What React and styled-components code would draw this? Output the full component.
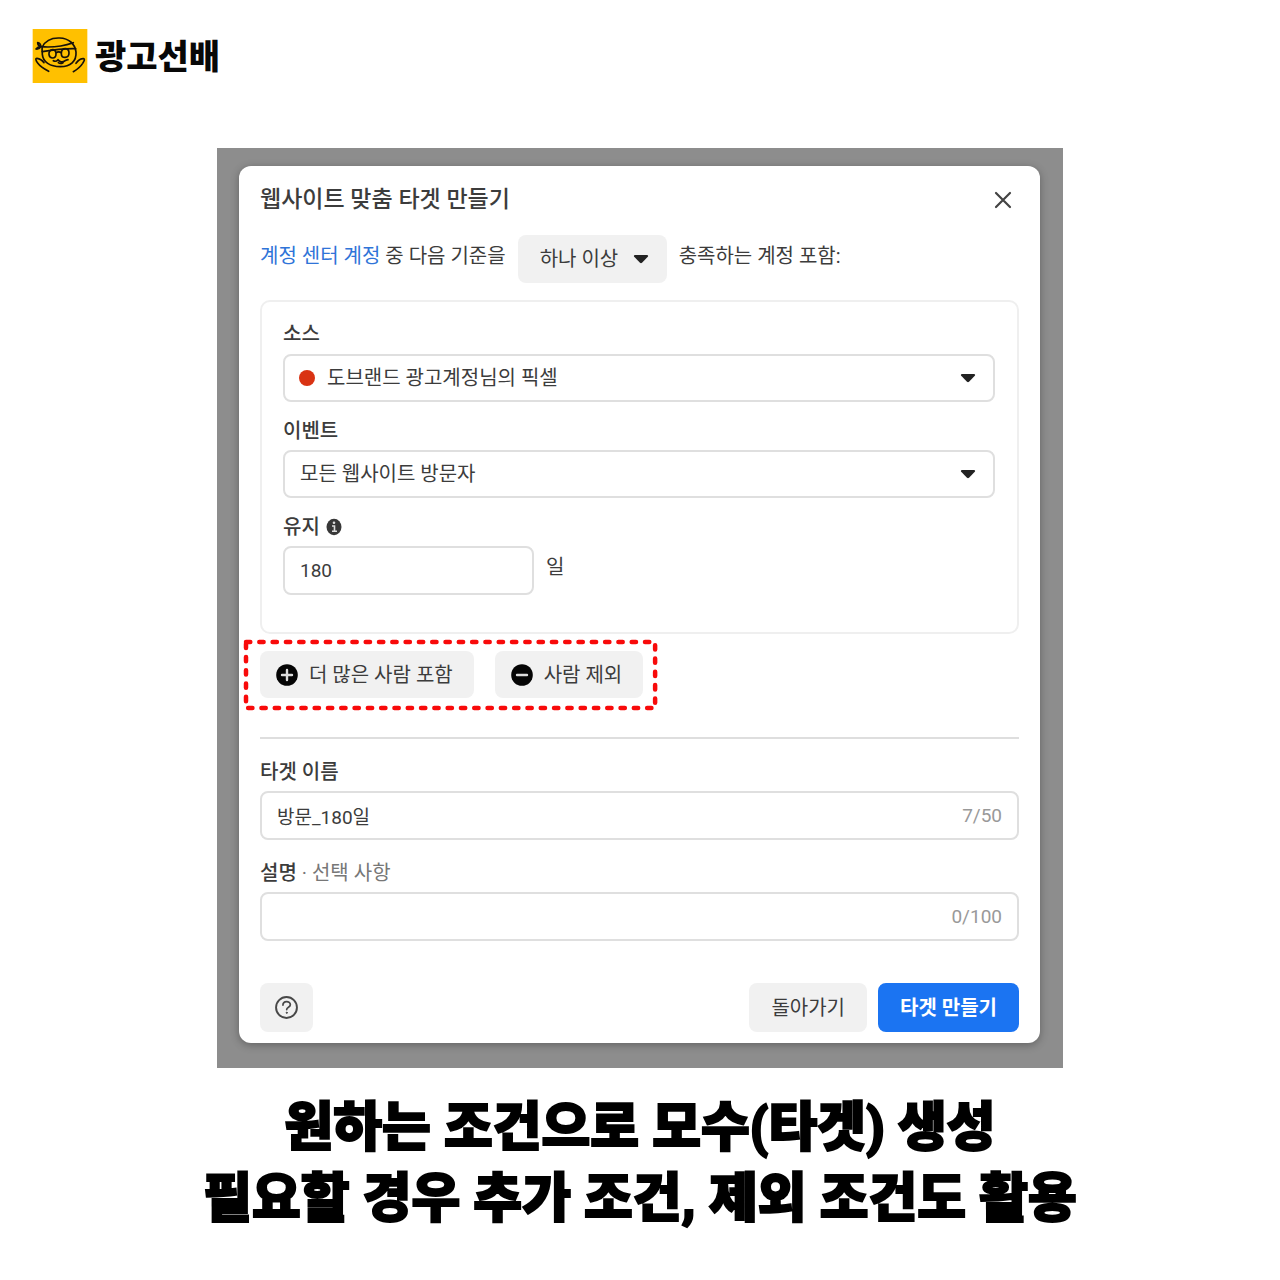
import React, { useState } from "react";
import styled, { createGlobalStyle, css } from "styled-components";

const GlobalStyle = createGlobalStyle`
  *, *::before, *::after { box-sizing: border-box; }
  body {
    margin: 0;
    background: #fff;
    color: #3c3c3c;
    font-family: Roboto, "Noto Sans CJK KR", sans-serif;
    font-size: 20px;
    line-height: 28px;
  }
  button, input, select { font: inherit; color: inherit; margin: 0; }
`;

const Page = styled.div`
  padding: 28px 32px 40px;
`;

const Brand = styled.header`
  display: flex;
  align-items: center;
  gap: 7px;
  margin-bottom: 64px;
`;

const BrandName = styled.span`
  padding-top: 2px;
  color: #080808;
  font-size: 34px;
  font-weight: 900;
  line-height: 40px;
`;

const Backdrop = styled.main`
  max-width: 846px;
  margin: 0 auto;
  padding: 18px 23px 25px 22px;
  background: #8d8d8d;
`;

const Dialog = styled.section`
  padding: 18px 21px 11px;
  border-radius: 12px;
  background: #fff;
  box-shadow: 0 2px 8px rgba(0, 0, 0, 0.3);
`;

const DialogHeader = styled.div`
  display: flex;
  align-items: center;
  justify-content: space-between;
  height: 32px;
`;

const DialogTitle = styled.h1`
  margin: 0;
  font-size: 23px;
  font-weight: 500;
  line-height: 32px;
`;

const CloseButton = styled.button`
  display: flex;
  align-items: center;
  justify-content: center;
  width: 32px;
  height: 32px;
  padding: 0;
  border: 0;
  background: none;
`;

const Criteria = styled.div`
  display: flex;
  align-items: flex-start;
  gap: 12px;
  margin: 19px 0 17px;
`;

const RowText = styled.span`
  line-height: 42px;
`;

const CenterLink = styled.a`
  color: #2f74d8;
  text-decoration: none;
`;

const SelectBox = styled.div`
  display: grid;
  grid-template-columns: 1fr auto;
  align-items: center;
  height: 48px;
  border-radius: 8px;
  ${(p) =>
    p.$filled
      ? css`background: #f1f1f1;`
      : css`border: 2px solid #dfdfdf; background: #fff;`}

  select {
    grid-area: 1 / 1 / 2 / 3;
    width: 100%;
    height: 100%;
    padding: 0 48px 0 ${(p) => (p.$filled ? 22 : p.$dot ? 42 : 15)}px;
    border: 0;
    border-radius: 8px;
    background: none;
    appearance: none;
  }
  svg {
    grid-area: 1 / 2 / 2 / 3;
    margin-right: ${(p) => (p.$filled ? 18 : 17)}px;
    pointer-events: none;
  }
`;

const StatusDot = styled.span`
  grid-area: 1 / 1 / 2 / 2;
  width: 16px;
  height: 16px;
  margin-left: 14px;
  border-radius: 50%;
  background: #d93313;
  pointer-events: none;
`;

const Card = styled.div`
  padding: 18px 22px 37px 21px;
  border: 2px solid #efefef;
  border-radius: 10px;
`;

const Field = styled.div`
  margin-top: ${(p) => p.$top || 0}px;
`;

const FieldLabel = styled.label`
  display: flex;
  align-items: center;
  gap: 6px;
  margin-bottom: ${(p) => p.$bottom || 5}px;
  font-weight: 500;
`;

const Optional = styled.span`
  color: #777;
  font-weight: 400;
`;

const InlineRow = styled.div`
  display: flex;
  align-items: flex-start;
  gap: 12px;
`;

const TextBox = styled.div`
  display: flex;
  align-items: center;
  width: ${(p) => p.$width || "100%"};
  height: 49px;
  padding: 0 15px;
  border: 2px solid #dfdfdf;
  border-radius: 8px;
  font-size: 19px;

  input {
    flex: 1;
    min-width: 0;
    height: 100%;
    padding: 0;
    border: 0;
    outline: 0;
    background: none;
  }
`;

const Counter = styled.span`
  color: #999;
`;

const Actions = styled.div`
  position: relative;
  display: flex;
  width: fit-content;
  gap: 21px;
  margin: 17px 0 39px;
`;

const Highlight = styled.svg`
  position: absolute;
  top: -12px;
  left: -17px;
  width: calc(100% + 30px);
  height: calc(100% + 24px);
  overflow: visible;
  pointer-events: none;
`;

const Button = styled.button`
  display: flex;
  align-items: center;
  justify-content: center;
  gap: 11px;
  height: ${(p) => (p.$compact ? 47 : 49)}px;
  padding: 0 ${(p) => (p.$compact ? "21px 0 16px" : p.$icon ? "15px" : "22px")};
  border: 0;
  border-radius: 8px;
  background: ${(p) => (p.$primary ? "#1b74f2" : "#f1f1f1")};
  color: ${(p) => (p.$primary ? "#fff" : "inherit")};
  font-weight: ${(p) => (p.$primary ? 700 : 400)};
  white-space: nowrap;
`;

const Divider = styled.hr`
  height: 2px;
  margin: 0 0 19px;
  border: 0;
  background: #dedede;
`;

const Footer = styled.div`
  display: flex;
  gap: 11px;
  margin-top: 42px;

  > :first-child { margin-right: auto; }
`;

const Caption = styled.p`
  margin: 25px 0 0;
  color: #000;
  font-size: 53px;
  font-weight: 900;
  line-height: 71px;
  text-align: center;
  -webkit-text-stroke: 2px #000;
`;

const Line = styled.span`
  display: block;
`;

const Logo = () => (
  <svg width="56" height="56" viewBox="0 0 168 168" aria-hidden="true">
    <rect x="2" y="3" width="164" height="162" fill="#ffc000" />
    <g fill="none" stroke="#17120a" strokeWidth="5" strokeLinecap="round" strokeLinejoin="round">
      <path d="M31 57C40 38 60 29 83 30c27 1 46 17 49 42 2 28-17 44-47 44-31 0-52-14-54-37 0-9-2-15 0-22Z" />
      <path d="M27 56c33 3 68-2 97-12M31 71c35-6 67-10 100-9" />
      <path d="M27 56c-1-7-5-11-10-12 0 5 2 9 8 12-6 0-10 3-13 7 7 1 12-2 15-7" />
      <path d="M62 65c-8 0-12 7-11 15 1 7 5 10 11 10 7 0 10-5 10-12 0-8-3-13-10-13ZM100 62c-8 0-12 7-12 15s4 11 11 11 12-5 12-13c0-7-4-13-11-13ZM72 75c5-4 11-4 16 0" />
      <path d="M64 98c5 3 10 2 14-3 4 7 14 8 20 4 4-2 7-4 10-4M79 104c4 3 9 3 14 0" />
      <path d="M36 104C31 97 25 92 15 91c-6 0-3 8 2 14 8 11 20 18 33 25M132 106c5-7 12-14 22-14 6 1 2 7-2 14-7 11-16 18-28 25" />
    </g>
  </svg>
);

const Caret = () => (
  <svg width="16" height="10" viewBox="0 0 16 10" aria-hidden="true">
    <path d="M2 1h12c1 0 1.500 1 .8 1.800L9 8.800c-.6.600-1.400.600-2 0L1.200 2.800C.5 2 1 1 2 1Z" fill="#222" />
  </svg>
);

const CloseIcon = () => (
  <svg width="18" height="18" viewBox="0 0 18 18" aria-hidden="true">
    <path d="M2 2l14 14M16 2L2 16" stroke="#444" strokeWidth="2.200" strokeLinecap="round" />
  </svg>
);

const InfoIcon = () => (
  <svg width="16" height="18" viewBox="0 0 16 18" aria-hidden="true">
    <ellipse cx="8" cy="9" rx="7.500" ry="8.200" fill="#383838" />
    <path d="M6 8h2.500v5M6 13.200h5" fill="none" stroke="#ddd" strokeWidth="1.600" />
    <circle cx="8" cy="4.800" r="1.300" fill="#ddd" />
  </svg>
);

const SignIcon = ({ plus }) => (
  <svg width="22" height="22" viewBox="0 0 22 22" aria-hidden="true">
    <circle cx="11" cy="11" r="10.800" fill="#050505" />
    <path d={plus ? "M6 11h10M11 6v10" : "M6 11h10"} stroke="#ddd" strokeWidth="2.400" strokeLinecap="round" />
  </svg>
);

const HelpIcon = () => (
  <svg width="23" height="23" viewBox="0 0 24 24" fill="none" stroke="#484848" strokeWidth="2" strokeLinecap="round" aria-hidden="true">
    <circle cx="12" cy="12" r="10.900" />
    <path d="M8.300 9.500c0-5 7.700-4.800 7.700-.4 0 2.700-3.800 2.500-3.800 5.100" strokeWidth="1.800" />
    <circle cx="12.200" cy="17.500" r=".6" fill="#484848" strokeWidth="1" />
  </svg>
);

export default function App() {
  const [days, setDays] = useState("180");
  const [name, setName] = useState("방문_180일");
  const [description, setDescription] = useState("");

  return (
    <Page>
      <GlobalStyle />
      <Brand>
        <Logo />
        <BrandName>광고선배</BrandName>
      </Brand>

      <Backdrop>
        <Dialog role="dialog" aria-labelledby="dialog-title">
          <DialogHeader>
            <DialogTitle id="dialog-title">웹사이트 맞춤 타겟 만들기</DialogTitle>
            <CloseButton type="button" aria-label="닫기">
              <CloseIcon />
            </CloseButton>
          </DialogHeader>

          <Criteria>
            <RowText>
              <CenterLink href="#accounts">계정 센터 계정</CenterLink> 중 다음 기준을
            </RowText>
            <SelectBox $filled>
              <select aria-label="기준">
                <option>하나 이상</option>
              </select>
              <Caret />
            </SelectBox>
            <RowText>충족하는 계정 포함:</RowText>
          </Criteria>

          <Card>
            <Field>
              <FieldLabel htmlFor="source" $bottom={6}>소스</FieldLabel>
              <SelectBox $dot>
                <StatusDot />
                <select id="source">
                  <option>도브랜드 광고계정님의 픽셀</option>
                </select>
                <Caret />
              </SelectBox>
            </Field>
            <Field $top={15}>
              <FieldLabel htmlFor="event">이벤트</FieldLabel>
              <SelectBox>
                <select id="event">
                  <option>모든 웹사이트 방문자</option>
                </select>
                <Caret />
              </SelectBox>
            </Field>
            <Field $top={15}>
              <FieldLabel htmlFor="days">
                유지 <InfoIcon />
              </FieldLabel>
              <InlineRow>
                <TextBox $width="251px">
                  <input id="days" value={days} onChange={(e) => setDays(e.target.value)} />
                </TextBox>
                <RowText>일</RowText>
              </InlineRow>
            </Field>
          </Card>

          <Actions>
            <Button type="button" $compact>
              <SignIcon plus />더 많은 사람 포함
            </Button>
            <Button type="button" $compact>
              <SignIcon />사람 제외
            </Button>
            <Highlight aria-hidden="true">
              <rect x="3" y="3" width="99%" height="66" fill="none" stroke="#f80a0a" strokeWidth="4.500" strokeLinecap="round" strokeDasharray="4.300 9" />
            </Highlight>
          </Actions>

          <Divider />

          <Field>
            <FieldLabel htmlFor="name">타겟 이름</FieldLabel>
            <TextBox>
              <input id="name" value={name} onChange={(e) => setName(e.target.value)} />
              <Counter>7/50</Counter>
            </TextBox>
          </Field>
          <Field $top={19}>
            <FieldLabel htmlFor="description">
              <span>
                설명 <Optional>· 선택 사항</Optional>
              </span>
            </FieldLabel>
            <TextBox>
              <input id="description" value={description} onChange={(e) => setDescription(e.target.value)} />
              <Counter>0/100</Counter>
            </TextBox>
          </Field>

          <Footer>
            <Button type="button" $icon aria-label="도움말">
              <HelpIcon />
            </Button>
            <Button type="button">돌아가기</Button>
            <Button type="button" $primary>
              타겟 만들기
            </Button>
          </Footer>
        </Dialog>
      </Backdrop>

      <Caption>
        <Line>원하는 조건으로 모수(타겟) 생성</Line>
        <Line>필요할 경우 추가 조건, 제외 조건도 활용</Line>
      </Caption>
    </Page>
  );
}
